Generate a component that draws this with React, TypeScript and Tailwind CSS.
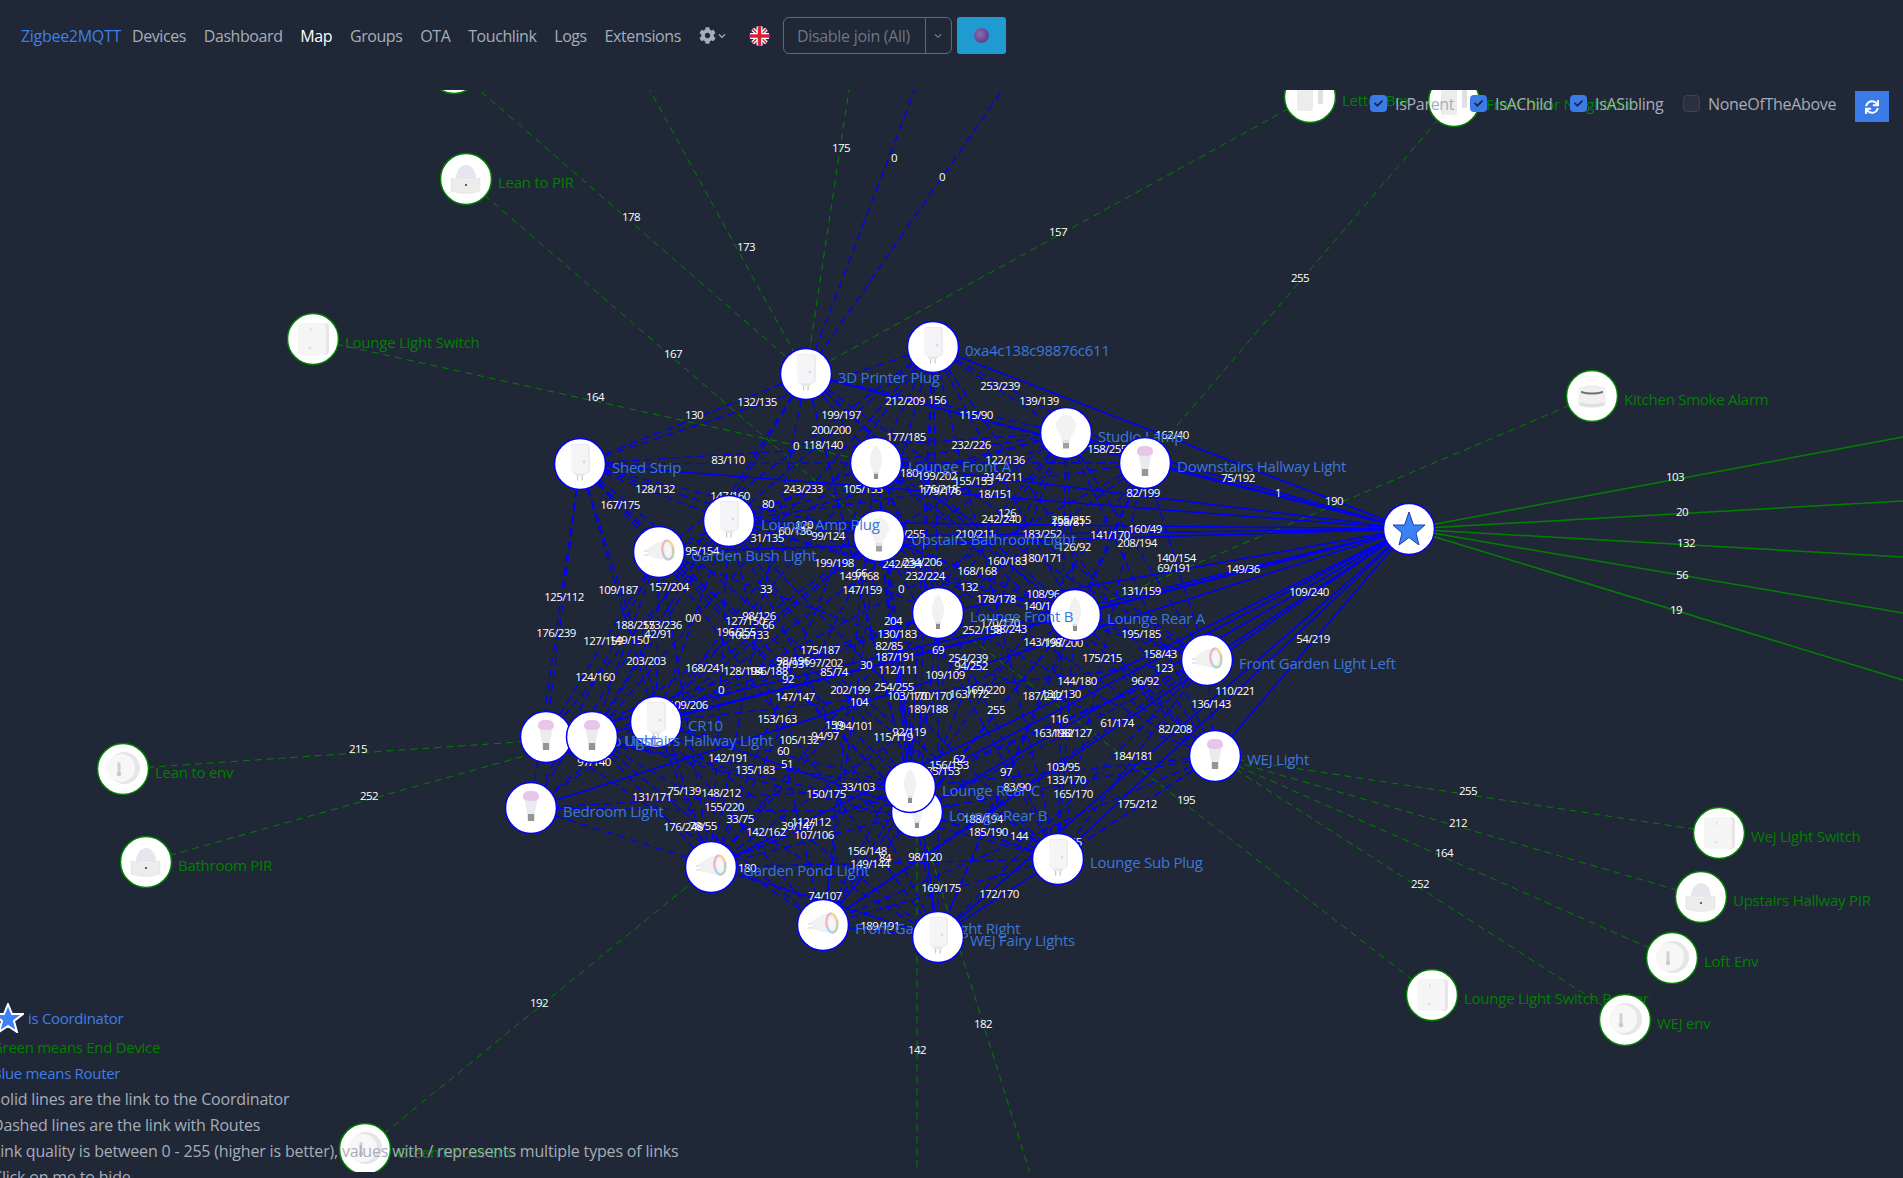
import { FaCog, FaChevronDown, FaSync, FaCheck } from "react-icons/fa";

type Kind = "plug" | "candle" | "bulb" | "hue" | "gu10" | "pir" | "env" | "switch" | "door" | "smoke";

type MapNode = {
  name: string;
  x: number;
  y: number;
  kind: Kind;
};

const COORD = { x: 1409, y: 529 };

// draw order matters, later nodes sit on top of earlier labels
const routers: MapNode[] = [
  { name: "3D Printer Plug", x: 806, y: 374, kind: "plug" },
  { name: "0xa4c138c98876c611", x: 933, y: 347, kind: "plug" },
  { name: "Shed Strip", x: 580, y: 464, kind: "plug" },
  { name: "Lounge Front A", x: 876, y: 463, kind: "candle" },
  { name: "Upstairs Bathroom Light", x: 879, y: 536, kind: "bulb" },
  { name: "Lounge Amp Plug", x: 729, y: 521, kind: "plug" },
  { name: "Garden Bush Light", x: 659, y: 552, kind: "gu10" },
  { name: "Studio Lamp", x: 1066, y: 433, kind: "bulb" },
  { name: "Downstairs Hallway Light", x: 1145, y: 463, kind: "hue" },
  { name: "Lounge Rear A", x: 1075, y: 615, kind: "candle" },
  { name: "Lounge Front B", x: 938, y: 613, kind: "candle" },
  { name: "Front Garden Light Left", x: 1207, y: 660, kind: "gu10" },
  { name: "WEJ Light", x: 1215, y: 756, kind: "hue" },
  { name: "Lounge Sub Plug", x: 1058, y: 859, kind: "plug" },
  { name: "Lounge Rear B", x: 917, y: 812, kind: "candle" },
  { name: "Lounge Rear C", x: 910, y: 787, kind: "candle" },
  { name: "CR10", x: 656, y: 722, kind: "plug" },
  { name: "Studio Light", x: 546, y: 737, kind: "hue" },
  { name: "Upstairs Hallway Light", x: 592, y: 737, kind: "hue" },
  { name: "Bedroom Light", x: 531, y: 808, kind: "hue" },
  { name: "Garden Pond Light", x: 711, y: 867, kind: "gu10" },
  { name: "Front Garden Light Right", x: 823, y: 925, kind: "gu10" },
  { name: "WEJ Fairy Lights", x: 938, y: 937, kind: "plug" },
];

const endDevices: MapNode[] = [
  { name: "", x: 454, y: 68, kind: "pir" },
  { name: "Lean to PIR", x: 466, y: 179, kind: "pir" },
  { name: "Lounge Light Switch", x: 313, y: 339, kind: "switch" },
  { name: "Letter Box", x: 1310, y: 97, kind: "door" },
  { name: "Front Door Neighbour", x: 1454, y: 101, kind: "door" },
  { name: "Kitchen Smoke Alarm", x: 1592, y: 396, kind: "smoke" },
  { name: "Wej Light Switch", x: 1719, y: 833, kind: "switch" },
  { name: "Upstairs Hallway PIR", x: 1701, y: 897, kind: "pir" },
  { name: "Loft Env", x: 1672, y: 958, kind: "env" },
  { name: "Lounge Light Switch Rocker", x: 1432, y: 995, kind: "switch" },
  { name: "WEJ env", x: 1625, y: 1020, kind: "env" },
  { name: "Lean to env", x: 123, y: 769, kind: "env" },
  { name: "Bathroom PIR", x: 146, y: 862, kind: "pir" },
  { name: "Green House Env", x: 365, y: 1149, kind: "env" },
];

// [x1, y1, x2, y2]
const greenDashed: number[][] = [
  [454, 68, 806, 374],
  [466, 179, 879, 536],
  [313, 339, 876, 463],
  [630, 54, 806, 374],
  [855, 50, 806, 374],
  [1310, 97, 806, 374],
  [1454, 101, 1145, 463],
  [1592, 396, 1075, 615],
  [1432, 995, 938, 613],
  [1719, 833, 1215, 756],
  [1701, 897, 1215, 756],
  [1672, 958, 1215, 756],
  [1625, 1020, 1215, 756],
  [123, 769, 592, 737],
  [146, 862, 592, 737],
  [365, 1149, 711, 867],
  [917, 812, 917, 1286],
  [917, 812, 1049, 1234],
];

const blueOffTop: number[][] = [
  [930, 50, 806, 374],
  [1030, 50, 806, 374],
];

const greenSolid: number[][] = [
  [1409, 529, 1903, 437],
  [1409, 529, 1903, 501],
  [1409, 529, 1903, 557],
  [1409, 529, 1903, 613],
  [1409, 529, 1903, 680],
];

const fixedLabels: [string, number, number][] = [
  ["167", 673, 353], ["164", 595, 396], ["178", 631, 216], ["173", 746, 246], ["175", 841, 147],
  ["0", 894, 157], ["0", 942, 176], ["157", 1058, 231], ["255", 1300, 277], ["190", 1334, 500],
  ["195", 1186, 799], ["255", 1468, 790], ["212", 1458, 822], ["164", 1444, 852], ["252", 1420, 883],
  ["215", 358, 748], ["252", 369, 795], ["192", 539, 1002], ["142", 917, 1049], ["182", 983, 1023],
  ["103", 1675, 476], ["20", 1682, 511], ["132", 1686, 542], ["56", 1682, 574], ["19", 1676, 609],
];

// labels between routers, the dashed links are worked out from these
const routerLabels: [string, number, number][] = [
  ["130", 694, 414], ["132/135", 757, 401], ["199/197", 841, 414], ["212/209", 905, 400], ["156", 937, 399],
  ["253/239", 1000, 385], ["115/90", 976, 414], ["200/200", 831, 429], ["0", 796, 445], ["118/140", 823, 444],
  ["177/185", 906, 436], ["232/226", 971, 444], ["122/136", 1005, 459], ["83/110", 728, 459], ["128/132", 655, 488],
  ["243/233", 803, 488], ["105/153", 863, 488], ["180", 909, 472], ["199/202", 937, 475], ["155/153", 973, 480],
  ["214/211", 1003, 476], ["176/218", 938, 488], ["179/176", 941, 490], ["18/151", 995, 493], ["167/175", 620, 504],
  ["147/160", 730, 495], ["80", 768, 503], ["126", 1007, 512], ["242/240", 1001, 518], ["120", 804, 524],
  ["60/136", 795, 530], ["99/124", 828, 535], ["31/135", 767, 537], ["255/255", 905, 533], ["210/211", 975, 533],
  ["95/154", 702, 550], ["199/198", 834, 562], ["242/234", 902, 563], ["234/206", 922, 561], ["160/183", 1007, 560],
  ["168/168", 977, 570], ["149/168", 859, 575], ["66", 861, 572], ["232/224", 925, 575], ["157/204", 669, 586],
  ["109/187", 618, 589], ["125/112", 564, 596], ["33", 766, 588], ["147/159", 862, 589], ["0", 901, 588],
  ["132", 969, 586], ["178/178", 996, 598], ["139/139", 1039, 400], ["162/40", 1172, 434], ["158/255", 1107, 448],
  ["75/192", 1238, 477], ["1", 1278, 492], ["82/199", 1143, 492], ["255/255", 1071, 519], ["198/81", 1068, 521],
  ["183/252", 1042, 533], ["141/170", 1110, 534], ["160/49", 1145, 528], ["208/194", 1137, 542], ["126/92", 1074, 546],
  ["180/171", 1042, 557], ["140/154", 1176, 557], ["69/191", 1174, 567], ["149/36", 1243, 568], ["108/96", 1043, 593],
  ["131/159", 1141, 590], ["109/240", 1309, 591], ["140/140", 1043, 605], ["176/239", 556, 632], ["188/255", 635, 624],
  ["173/236", 662, 624], ["42/91", 658, 633], ["0/0", 693, 617], ["98/126", 759, 615], ["127/150", 745, 620],
  ["66", 768, 624], ["196/255", 736, 631], ["106/133", 749, 634], ["127/159", 603, 640], ["149/150", 629, 639],
  ["204", 893, 620], ["130/183", 897, 633], ["252/158", 982, 629], ["170/170", 1000, 622], ["58/243", 1010, 628],
  ["175/187", 820, 649], ["82/85", 889, 645], ["69", 938, 649], ["203/203", 646, 660], ["98/196", 793, 660],
  ["76/93", 790, 663], ["197/202", 823, 662], ["187/191", 895, 656], ["254/239", 968, 657], ["30", 866, 664],
  ["94/252", 971, 665], ["168/241", 705, 667], ["128/194", 743, 670], ["186/188", 768, 670], ["85/74", 834, 671],
  ["112/111", 898, 669], ["92", 788, 678], ["124/160", 595, 676], ["109/109", 945, 674], ["254/255", 894, 686],
  ["0", 721, 689], ["202/199", 850, 689], ["103/170", 907, 695], ["170/170", 932, 695], ["163/172", 969, 693],
  ["169/220", 985, 689], ["147/147", 795, 696], ["104", 859, 701], ["189/188", 928, 708], ["255", 996, 709],
  ["109/206", 688, 704], ["153/163", 777, 718], ["159", 834, 724], ["194/101", 853, 725], ["92/119", 909, 731],
  ["115/119", 893, 736], ["105/132", 799, 739], ["94/97", 825, 735], ["60", 783, 750], ["142/191", 728, 757],
  ["51", 787, 763], ["135/183", 755, 769], ["97/140", 594, 761], ["62", 959, 758], ["156/153", 949, 764],
  ["85/153", 943, 770], ["97", 1006, 771], ["83/90", 1017, 786], ["33/103", 858, 786], ["75/139", 684, 790],
  ["148/212", 721, 792], ["150/175", 826, 793], ["131/171", 652, 796], ["155/220", 724, 806], ["33/75", 740, 818],
  ["112/112", 811, 821], ["39/147", 798, 825], ["176/248", 683, 826], ["78/55", 703, 825], ["188/194", 983, 818],
  ["142/162", 766, 831], ["107/106", 814, 834], ["185/190", 988, 831], ["156/148", 867, 850], ["84", 885, 857],
  ["149/144", 870, 863], ["98/120", 925, 856], ["180", 747, 867], ["169/175", 941, 887], ["172/170", 999, 893],
  ["74/107", 825, 895], ["189/191", 880, 925], ["195/185", 1141, 633], ["143/197", 1043, 641], ["198/200", 1063, 642],
  ["158/43", 1160, 653], ["54/219", 1313, 638], ["175/215", 1102, 657], ["123", 1164, 667], ["144/180", 1077, 680],
  ["96/92", 1145, 680], ["187/242", 1042, 695], ["131/130", 1061, 693], ["110/221", 1235, 690], ["136/143", 1211, 703],
  ["61/174", 1117, 722], ["116", 1059, 718], ["82/208", 1175, 728], ["163/182", 1053, 732], ["198/127", 1072, 732],
  ["184/181", 1133, 755], ["103/95", 1063, 766], ["133/170", 1066, 779], ["165/170", 1073, 793], ["175/212", 1137, 803],
  ["144", 1019, 835], ["255/255", 1062, 841],
];

function dashedFromLabels() {
  const points = [...routers.map((r) => ({ x: r.x, y: r.y })), COORD];
  const used = new Set<string>();
  const out: number[][] = [];
  for (const [, lx, ly] of routerLabels) {
    let best = "";
    let bestDist = Infinity;
    for (let a = 0; a < points.length; a++) {
      for (let b = a + 1; b < points.length; b++) {
        const key = `${a}-${b}`;
        if (used.has(key)) continue;
        const d = Math.hypot((points[a].x + points[b].x) / 2 - lx, (points[a].y + points[b].y) / 2 - ly);
        if (d < bestDist) {
          bestDist = d;
          best = key;
        }
      }
    }
    used.add(best);
    const [a, b] = best.split("-").map(Number);
    if (a === points.length - 1 || b === points.length - 1) continue;
    out.push([points[a].x, points[a].y, points[b].x, points[b].y]);
  }
  return out;
}

const blueDashed = dashedFromLabels();

function DeviceImage({ kind }: { kind: Kind }) {
  if (kind === "plug") {
    return (
      <g>
        <path d="M-5 8 L5 8 L4.5 12 L-4.5 12 Z" fill="#e8e8ea" />
        <rect x="-3" y="12" width="1.2" height="4.5" fill="#c8c8c8" />
        <rect x="1.5" y="12" width="1.2" height="4.5" fill="#c8c8c8" />
        <path d="M-9 -18 Q-9 -20 -7 -20 L7 -20 Q10 -20 10 -17 L10 5 Q10 9 6 10 L-5 10 Q-9 9 -9 5 Z" fill="#ededf0" />
        <path d="M-9 -16 Q-9 -19 -6 -19 L5 -19 Q8 -19 8 -16 L8 6 Q8 9 5 9 L-5 9 Q-9 8 -9 5 Z" fill="#f5f5f7" />
        <circle cx="4" cy="-2" r="1.5" fill="#dcdce0" />
      </g>
    );
  }
  if (kind === "candle") {
    return (
      <g>
        <rect x="-2.5" y="8" width="5" height="3.5" fill="#dddddd" />
        <rect x="-2" y="11" width="4" height="5" fill="#8d8d8d" />
        <path d="M0 -18 C4 -14 6.5 -8 6 -2 C5.5 3 4 7 3 9 L-3 9 C-4 7 -5.5 3 -6 -2 C-6.5 -8 -4 -14 0 -18 Z" fill="#f1f1f1" />
      </g>
    );
  }
  if (kind === "bulb") {
    return (
      <g>
        <rect x="-3.5" y="7" width="7" height="3" fill="#e2e2e2" />
        <rect x="-3" y="10" width="6" height="5.5" fill="#a0a0a0" />
        <path d="M0 -18 C7 -18 10 -12 10 -7 C10 -2 5 1 4 7 L-4 7 C-5 1 -10 -2 -10 -7 C-10 -12 -7 -18 0 -18 Z" fill="#f2f2f2" />
      </g>
    );
  }
  if (kind === "hue") {
    return (
      <g>
        <path d="M-6 -8 L6 -8 C6 -2 4 1 4 6 L-4 6 C-4 1 -6 -2 -6 -8 Z" fill="#ebebed" />
        <path d="M-8 -11 C-8 -16 -5 -17 0 -17 C5 -17 8 -16 8 -11 C8 -8 5 -7 0 -7 C-5 -7 -8 -8 -8 -11 Z" fill="#e8c6ea" />
        <rect x="-3.2" y="6" width="6.4" height="7" fill="#959595" />
      </g>
    );
  }
  if (kind === "gu10") {
    return (
      <g transform="rotate(-6)">
        <rect x="-15" y="-3" width="5" height="1.2" fill="#d8d8d8" />
        <rect x="-15" y="1" width="5" height="1.2" fill="#d8d8d8" />
        <path d="M-11 -5 L0 -10 L9 -11 L9 9 L0 7 L-11 3 Z" fill="#f1f1f1" />
        <ellipse cx="9" cy="-1" rx="5.5" ry="9.5" fill="#efefef" stroke="#eeb0c0" strokeWidth="2" />
        <path d="M9 -10.5 A5.5 9.5 0 0 1 14 -4" fill="none" stroke="#f2d98c" strokeWidth="2" />
        <path d="M14.4 -1 A5.5 9.5 0 0 1 11 8" fill="none" stroke="#a9dfae" strokeWidth="2" />
        <path d="M9 8.5 A5.5 9.5 0 0 1 4.2 3" fill="none" stroke="#a8d4ef" strokeWidth="2" />
        <ellipse cx="9" cy="-1" rx="3" ry="6" fill="#f6f6f6" />
      </g>
    );
  }
  if (kind === "pir") {
    return (
      <g>
        <path d="M-10 0 C-10 -9 -5 -14 0 -14 C5 -14 10 -9 10 0 Z" fill="#e6e6ee" />
        <path d="M-15 -1 Q0 3 14 -1 L14 12 Q0 17 -15 12 Z" fill="#ececec" stroke="#dedede" strokeWidth="0.5" />
        <circle cx="0" cy="6" r="1" fill="#333333" />
      </g>
    );
  }
  if (kind === "env") {
    return (
      <g>
        <circle cx="1" cy="-1" r="16" fill="#e6e6e6" />
        <circle cx="-2" cy="-1" r="14" fill="#f7f7f7" />
        <rect x="-5.5" y="-7" width="3" height="12" rx="1.5" fill="#d2d2d2" />
        <circle cx="-4" cy="5" r="2.2" fill="#c8c8c8" />
      </g>
    );
  }
  if (kind === "switch") {
    return (
      <g>
        <rect x="-14" y="-16" width="30" height="32" rx="4" fill="#e6e6e6" />
        <rect x="-15" y="-16" width="28" height="32" rx="4" fill="#f5f5f5" />
        <rect x="-3" y="-11" width="1.5" height="3" fill="#e2e2e2" />
        <circle cx="-3" cy="9" r="1.5" fill="#e2e2e2" />
      </g>
    );
  }
  if (kind === "door") {
    return (
      <g>
        <rect x="-13" y="-20" width="16" height="34" rx="2" fill="#ececec" />
        <rect x="8" y="-12" width="5" height="19" rx="1" fill="#e0e0e0" />
      </g>
    );
  }
  return (
    <g>
      <path d="M-13 -8 Q0 -14 13 -8 L14 6 Q0 11 -14 6 Z" fill="#f0f0f0" />
      <path d="M-11 -5 Q0 -2 11 -5 L11 -3 Q0 0 -11 -3 Z" fill="#6e6e6e" />
      <path d="M-14 6 Q0 10 14 6 L12 10 Q0 13 -12 10 Z" fill="#e0e0e0" />
    </g>
  );
}

function Node({ node, router }: { node: MapNode; router: boolean }) {
  const stroke = router ? "stroke-[#0000ff]" : "stroke-[#008000]";
  const fill = router ? "fill-[#3b78dc]" : "fill-[#008000]";
  return (
    <g>
      <circle cx={node.x} cy={node.y} r="25.5" className={`fill-white stroke-[1.5] ${stroke}`} />
      <g transform={`translate(${node.x} ${node.y})`}>
        <DeviceImage kind={node.kind} />
      </g>
      <text x={node.x + 32} y={node.y + 8.5} className={`text-[15px] tracking-[-0.25px] ${fill}`}>
        {node.name}
      </text>
    </g>
  );
}

function UkFlag() {
  return (
    <svg viewBox="0 0 20 20" className="h-5 w-[21px]">
      <clipPath id="flagclip">
        <circle cx="10" cy="10" r="10" />
      </clipPath>
      <g clipPath="url(#flagclip)">
        <rect width="20" height="20" fill="#1f2f7a" />
        <path d="M0 0 L20 20 M20 0 L0 20" stroke="#ffffff" strokeWidth="4" />
        <path d="M0 0 L20 20 M20 0 L0 20" stroke="#d9202f" strokeWidth="1.5" />
        <path d="M10 0 V20 M0 10 H20" stroke="#ffffff" strokeWidth="6" />
        <path d="M10 0 V20 M0 10 H20" stroke="#d9202f" strokeWidth="3.5" />
      </g>
    </svg>
  );
}

function Check({ label, checked, className }: { label: string; checked: boolean; className: string }) {
  return (
    <label className={`flex items-center gap-2 ${className}`}>
      <span
        className={`flex h-[17px] w-[17px] shrink-0 items-center justify-center rounded-[4px] ${
          checked ? "bg-[#3b7be8]" : "border border-[#3b4252] bg-[#2a3040]"
        }`}
      >
        {checked ? <FaCheck className="h-[9px] w-[9px] text-[#1f2736]" /> : null}
      </span>
      <span>{label}</span>
    </label>
  );
}

const navItems = ["Devices", "Dashboard", "Map", "Groups", "OTA", "Touchlink", "Logs", "Extensions"];

export default function App() {
  return (
    <div className="relative flex h-screen w-full flex-col overflow-hidden bg-[#202736] font-['Open_Sans',sans-serif] text-base tracking-[-0.3px] text-[#a6adba]">
      <nav className="flex h-[90px] items-start pt-[17px] pl-[21px]">
        <div className="flex h-[37px] items-center">
          <a className="mr-[11px] text-[#3f7ee8]">Zigbee2MQTT</a>
          <ul className="flex items-center gap-[17.8px] tracking-[-0.42px]">
            {navItems.map((item) => (
              <li key={item} className={item === "Map" ? "text-white" : ""}>
                {item}
              </li>
            ))}
          </ul>
          <div className="ml-[18px] flex items-center gap-[2px]">
            <FaCog className="h-[17px] w-[17px]" />
            <FaChevronDown className="h-[8px] w-[8px]" />
          </div>
          <div className="ml-[23px]">
            <UkFlag />
          </div>
        </div>
        <div className="ml-[13px] flex h-[37px] w-[169px] items-center rounded-md border border-[#626976] text-[#6e7583]">
          <span className="flex-1 pl-[13px]">Disable join (All)</span>
          <span className="flex h-full w-[26px] items-center justify-center border-l border-[#626976]">
            <FaChevronDown className="h-[8px] w-[8px]" />
          </span>
        </div>
        <button type="button" className="ml-[5px] flex h-[37px] w-[49px] items-center justify-center rounded-[3px] bg-[#1f9bd1]">
          <svg viewBox="0 0 17 17" className="h-[17px] w-[17px]">
            <radialGradient id="orb" cx="0.4" cy="0.4" r="0.7">
              <stop offset="0" stopColor="#8f6cb8" />
              <stop offset="1" stopColor="#543a80" />
            </radialGradient>
            <circle cx="8.5" cy="8.5" r="7.5" fill="url(#orb)" />
          </svg>
        </button>
      </nav>

      <svg
        viewBox="0 90 1903 1082"
        className="block h-[1082px] w-[1903px] shrink-0 text-[11.5px] tracking-[-0.6px]"
        fill="none"
      >
        {greenDashed.map((l, i) => (
          <line key={i} x1={l[0]} y1={l[1]} x2={l[2]} y2={l[3]} stroke="#008000" strokeDasharray="7 5" />
        ))}
        {greenSolid.map((l, i) => (
          <line key={i} x1={l[0]} y1={l[1]} x2={l[2]} y2={l[3]} stroke="#008000" strokeWidth="1.5" />
        ))}
        {blueDashed.concat(blueOffTop).map((l, i) => (
          <line key={i} x1={l[0]} y1={l[1]} x2={l[2]} y2={l[3]} stroke="#0000ff" strokeWidth="1.3" strokeDasharray="8 5" />
        ))}
        {routers.map((r) => (
          <line key={r.name} x1={r.x} y1={r.y} x2={COORD.x} y2={COORD.y} stroke="#0000ff" strokeWidth="1.5" />
        ))}
        {routerLabels.concat(fixedLabels).map(([text, x, y], i) => (
          <text key={i} x={x} y={y} textAnchor="middle" dominantBaseline="central" className="fill-white">
            {text}
          </text>
        ))}
        {endDevices.map((n) => (
          <Node key={n.name} node={n} router={false} />
        ))}
        {routers.map((n) => (
          <Node key={n.name} node={n} router={true} />
        ))}
        <circle cx={COORD.x} cy={COORD.y} r="25.5" className="fill-white stroke-[#0000ff] stroke-[1.5]" />
        <polygon
          points="1409,512 1413.5,525 1425,525 1416,533 1419,545 1409,537.5 1399,545 1402,533 1393,525 1404.5,525"
          fill="#3b82f6"
          stroke="#1e3fa8"
        />
      </svg>

      <div className="absolute top-[91px] right-[14px] flex h-[31px] items-start">
        <div className="flex h-[25px] items-center">
          <Check label="IsParent" checked className="w-[100px]" />
          <Check label="IsAChild" checked className="w-[100px]" />
          <Check label="IsASibling" checked className="w-[113px]" />
          <Check label="NoneOfTheAbove" checked={false} className="w-[172px]" />
        </div>
        <button type="button" className="flex h-[31px] w-[34px] items-center justify-center bg-[#3b7be8] text-white">
          <FaSync className="h-[14px] w-[14px]" />
        </button>
      </div>

      <ul className="absolute top-[1003px] left-[-8px] flex flex-col gap-[2px] whitespace-nowrap tracking-[-0.18px]">
        <li className="flex h-[30px] items-center gap-[4px] text-[15px] tracking-[-0.3px] text-[#3f7ee8]">
          <svg viewBox="0 0 32 30" className="h-[30px] w-[32px]">
            <polygon
              points="16,1 20,11 31,11 22,18 25,29 16,23 7,29 10,18 1,11 12,11"
              fill="#3b82f6"
              stroke="#ffffff"
              strokeWidth="2"
            />
          </svg>
          is Coordinator
        </li>
        <li className="h-6 text-[15px] leading-6 tracking-[-0.3px] text-[#008000]">Green means End Device</li>
        <li className="h-6 text-[15px] leading-6 tracking-[-0.3px] text-[#3f7ee8]">Blue means Router</li>
        <li className="h-6 leading-6">Solid lines are the link to the Coordinator</li>
        <li className="h-6 leading-6">Dashed lines are the link with Routes</li>
        <li className="h-6 leading-6">Link quality is between 0 - 255 (higher is better), values with / represents multiple types of links</li>
        <li className="h-6 leading-6">Click on me to hide</li>
      </ul>
    </div>
  );
}
